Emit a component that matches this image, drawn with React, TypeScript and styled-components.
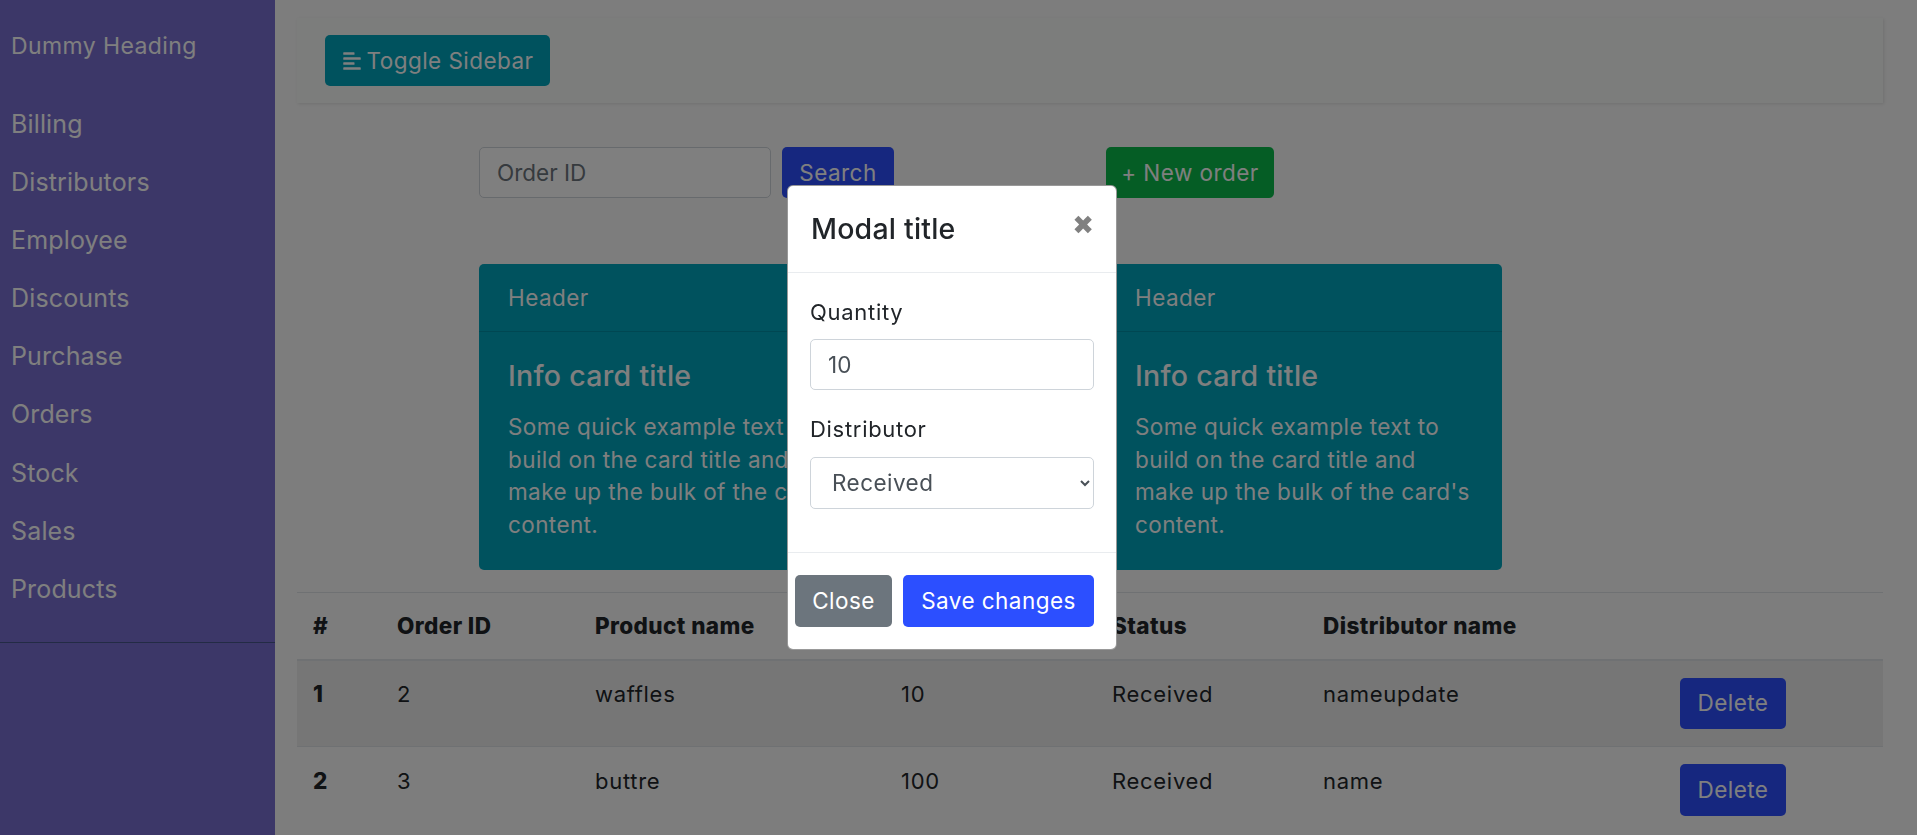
import React from "react";
import styled, { createGlobalStyle } from "styled-components";
import { FaAlignLeft } from "react-icons/fa";

const Global = createGlobalStyle`
  html, body { margin: 0; padding: 0; background: #fafafa; }
  body { font-family: Inter, "Noto Sans", sans-serif; color: #212529; overflow: hidden; }
  * { box-sizing: border-box; }
`;

const Page = styled.div`
  display: flex;
  height: 835px;
  overflow: hidden;
`;

const Sidebar = styled.aside`
  width: 275px;
  flex: none;
  background: #786ed0;
  color: #fff;
`;

const SidebarHeading = styled.h3`
  margin: 0;
  height: 95px;
  padding: 31px 0 0 11px;
  font-size: 23px;
  line-height: 30px;
  font-weight: 400;
  letter-spacing: 0.4px;
`;

const Menu = styled.ul`
  list-style: none;
  margin: 0;
  padding: 0 0 24px;
  border-bottom: 1px solid #47578a;
`;

const MenuItem = styled.li`
  height: 58.1px;
  padding-left: 11px;
  font-size: 25px;
  line-height: 58px;
  letter-spacing: 0.15px;
`;

const Main = styled.main`
  flex: 1;
  min-width: 0;
  padding: 18px 34px 0 22px;
`;

const Navbar = styled.nav`
  display: flex;
  align-items: center;
  height: 85px;
  padding-left: 28px;
  background: #f8fbf8;
  box-shadow: 1px 1px 3px rgba(0, 0, 0, 0.1);
`;

const Button = styled.button<{ $bg: string; $w: number }>`
  display: inline-flex;
  align-items: center;
  justify-content: center;
  gap: 5px;
  width: ${(p) => p.$w}px;
  height: 51.5px;
  padding: 0;
  border: none;
  border-radius: 5px;
  background: ${(p) => p.$bg};
  color: #fff;
  font-family: inherit;
  font-size: 22.5px;
  line-height: 30px;
  letter-spacing: 0.45px;
  white-space: nowrap;
`;

const Toolbar = styled.div`
  display: flex;
  align-items: center;
  height: 51px;
  margin-top: 44px;
  padding-left: 182px;
`;

const SearchInput = styled.input`
  width: 292px;
  height: 51px;
  padding: 0 17px;
  margin-right: 11px;
  border: 1px solid #ced4da;
  border-radius: 5px;
  background: #fff;
  font-family: inherit;
  font-size: 22.5px;
  &::placeholder { color: #6c757d; opacity: 1; }
`;

const NewOrder = styled.div`
  margin-left: 212px;
`;

const Cards = styled.div`
  display: flex;
  gap: 231px;
  margin-top: 66px;
  padding-left: 182px;
`;

const Card = styled.section`
  width: 396px;
  height: 306px;
  border-radius: 5px;
  background: #00a4bc;
  color: #fff;
`;

const CardHeader = styled.header`
  height: 68px;
  padding: 0 29px;
  font-size: 22.5px;
  letter-spacing: 0.45px;
  line-height: 68px;
  border-bottom: 1px solid rgba(0, 0, 0, 0.125);
`;

const CardBody = styled.div`
  padding: 26px 29px 0;
`;

const CardTitle = styled.h5`
  margin: 0 0 17px;
  font-size: 28.5px;
  line-height: 36px;
  font-weight: 500;
  letter-spacing: 0.3px;
`;

const CardText = styled.p`
  margin: 0;
  font-size: 22.5px;
  line-height: 32.6px;
  letter-spacing: 0.4px;
`;

const Table = styled.table`
  width: 100%;
  margin-top: 22px;
  border-collapse: collapse;
  table-layout: fixed;
  font-size: 22px;
`;

const Col = styled.col<{ $w: number }>`
  width: ${(p) => p.$w}px;
`;

const HeadRow = styled.tr`
  height: 67px;
  border-top: 1px solid #dee2e6;
  border-bottom: 2px solid #dee2e6;
`;

const Th = styled.th`
  padding: 0 16px;
  text-align: left;
  font-weight: 800;
  font-size: 22.5px;
  letter-spacing: 0.4px;
  white-space: nowrap;
`;

const Row = styled.tr<{ $striped?: boolean }>`
  height: 87px;
  border-bottom: 1px solid #dee2e6;
  background: ${(p) => (p.$striped ? "rgba(0,0,0,0.05)" : "transparent")};
  &:last-child { border-bottom: none; }
`;

const Td = styled.td`
  padding: 18.5px 16px 0;
  vertical-align: top;
  line-height: 30px;
  letter-spacing: 0.7px;
`;

const RowHead = styled.th`
  padding: 18.5px 16px 0;
  vertical-align: top;
  line-height: 30px;
  text-align: left;
  font-weight: 800;
  font-size: 22.5px;
`;

const ActionCell = styled(Td)`
  padding-top: 17px;
`;

const Backdrop = styled.div`
  position: fixed;
  inset: 0;
  background: rgba(0, 0, 0, 0.5);
`;

const Modal = styled.div`
  position: fixed;
  top: 185px;
  left: 787px;
  width: 330px;
  height: 465px;
  background: #fff;
  border: 1px solid rgba(0, 0, 0, 0.4);
  border-radius: 6px;
`;

const ModalHeader = styled.header`
  display: flex;
  justify-content: space-between;
  height: 87px;
  padding: 0 22px 0 23px;
  border-bottom: 1px solid #e9ecef;
`;

const ModalTitle = styled.h5`
  margin: 22.5px 0 0;
  font-size: 28.5px;
  line-height: 40px;
  font-weight: 500;
  letter-spacing: 0.2px;
  color: #212529;
`;

const CloseGlyph = styled.span`
  margin-top: 21px;
  font-family: "DejaVu Sans", sans-serif;
  font-size: 26px;
  line-height: 36px;
  color: #808080;
`;

const ModalBody = styled.div`
  height: 280px;
  padding: 23.5px 22px 0;
  border-bottom: 1px solid #e9ecef;
`;

const Label = styled.label`
  display: block;
  font-size: 22px;
  line-height: 30px;
  letter-spacing: 0.7px;
  color: #212529;
`;

const Quantity = styled.input`
  display: block;
  width: 100%;
  height: 51px;
  margin: 12.5px 0 24px;
  padding: 0 17px;
  border: 1px solid #ced4da;
  border-radius: 5px;
  font-family: inherit;
  font-size: 22.5px;
  color: #495057;
`;

const Select = styled.select`
  display: block;
  width: 100%;
  height: 52px;
  margin-top: 12.5px;
  padding: 0 17px;
  border: 1px solid #ced4da;
  border-radius: 5px;
  background: #fff;
  font-family: inherit;
  font-size: 22.5px;
  letter-spacing: 0.45px;
  color: #495057;
`;

const ModalFooter = styled.footer`
  display: flex;
  gap: 11px;
  padding: 22px 22px 0 7px;
`;

const menu = ["Billing", "Distributors", "Employee", "Discounts", "Purchase", "Orders", "Stock", "Sales", "Products"];
const cols = [84, 198, 306, 211, 211, 357, 219];
const rows = [
  { n: 1, id: 2, name: "waffles", qty: 10, status: "Received", dist: "nameupdate" },
  { n: 2, id: 3, name: "buttre", qty: 100, status: "Received", dist: "name" },
];

const InfoCard = () => (
  <Card>
    <CardHeader>Header</CardHeader>
    <CardBody>
      <CardTitle>Info card title</CardTitle>
      <CardText>Some quick example text to build on the card title and make up the bulk of the card's content.</CardText>
    </CardBody>
  </Card>
);

export default function App() {
  return (
    <Page>
      <Global />
      <Sidebar>
        <SidebarHeading>Dummy Heading</SidebarHeading>
        <Menu>
          {menu.map((m) => (
            <MenuItem key={m}>{m}</MenuItem>
          ))}
        </Menu>
      </Sidebar>
      <Main>
        <Navbar>
          <Button $bg="#00a4bc" $w={225}>
            <FaAlignLeft size={20} />
            Toggle Sidebar
          </Button>
        </Navbar>
        <Toolbar>
          <SearchInput placeholder="Order ID" />
          <Button $bg="#2c4fff" $w={112}>Search</Button>
          <NewOrder>
            <Button $bg="#0abb4a" $w={168}>+ New order</Button>
          </NewOrder>
        </Toolbar>
        <Cards>
          <InfoCard />
          <InfoCard />
        </Cards>
        <Table>
          <colgroup>
            {cols.map((w, i) => (
              <Col key={i} $w={w} />
            ))}
          </colgroup>
          <thead>
            <HeadRow>
              <Th>#</Th>
              <Th>Order ID</Th>
              <Th>Product name</Th>
              <Th>Quantity</Th>
              <Th>Status</Th>
              <Th>Distributor name</Th>
              <Th />
            </HeadRow>
          </thead>
          <tbody>
            {rows.map((r) => (
              <Row key={r.n} $striped={r.n === 1}>
                <RowHead scope="row">{r.n}</RowHead>
                <Td>{r.id}</Td>
                <Td>{r.name}</Td>
                <Td>{r.qty}</Td>
                <Td>{r.status}</Td>
                <Td>{r.dist}</Td>
                <ActionCell>
                  <Button $bg="#2c4fff" $w={106}>Delete</Button>
                </ActionCell>
              </Row>
            ))}
          </tbody>
        </Table>
      </Main>
      <Backdrop />
      <Modal>
        <ModalHeader>
          <ModalTitle>Modal title</ModalTitle>
          <CloseGlyph>✖</CloseGlyph>
        </ModalHeader>
        <ModalBody>
          <Label>Quantity</Label>
          <Quantity defaultValue="10" />
          <Label>Distributor</Label>
          <Select defaultValue="Received">
            <option>Received</option>
          </Select>
        </ModalBody>
        <ModalFooter>
          <Button $bg="#6c757d" $w={97}>Close</Button>
          <Button $bg="#2c4fff" $w={191}>Save changes</Button>
        </ModalFooter>
      </Modal>
    </Page>
  );
}
